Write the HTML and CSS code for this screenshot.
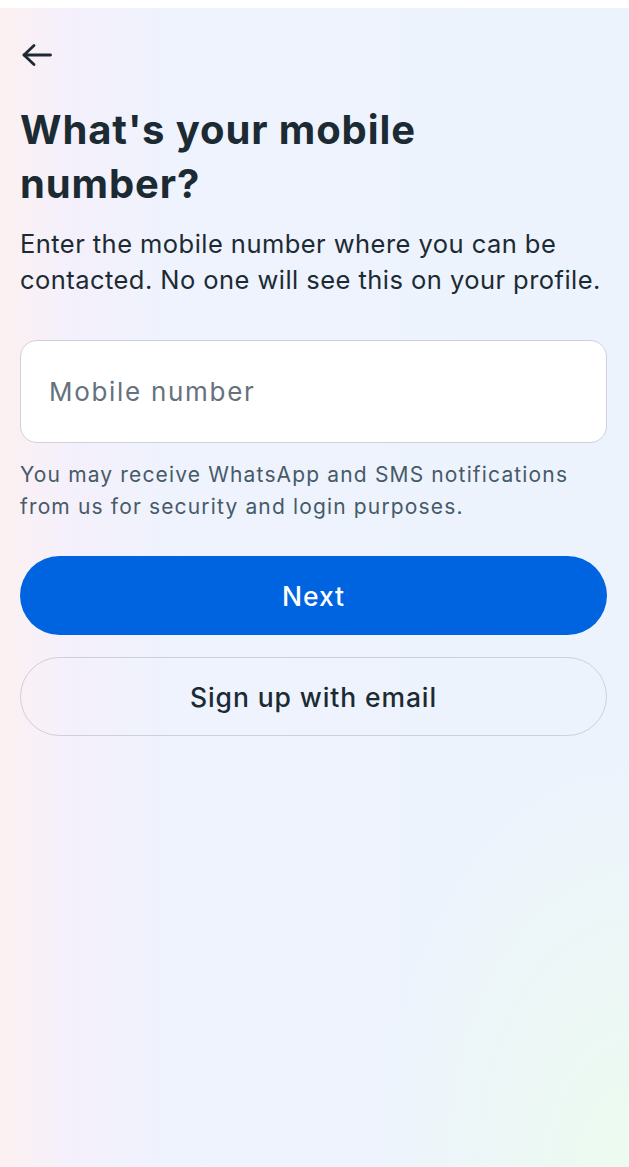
FILE: index.html
```html
<!DOCTYPE html>
<html lang="en">
<head>
<meta charset="utf-8">
<title>What's your mobile number?</title>
<link rel="stylesheet" href="styles.css">
</head>
<body>
<div class="statusbar"></div>
<main class="page">
  <button class="back" aria-label="Back">
    <svg width="32" height="24" viewBox="0 0 32 24" fill="none" stroke="#1c2b33" stroke-width="2.8" stroke-linecap="round" stroke-linejoin="round">
      <path d="M30.5 12H4"/>
      <path d="M14 2.5L4 12L14 21.5"/>
    </svg>
  </button>
  <h1 class="title">What's your mobile number?</h1>
  <p class="lead">Enter the mobile number where you can be contacted. No one will see this on your profile.</p>
  <div class="field"><span class="placeholder">Mobile number</span></div>
  <p class="hint">You may receive WhatsApp and SMS notifications from us for security and login purposes.</p>
  <div class="actions">
    <button class="btn primary">Next</button>
    <button class="btn secondary">Sign up with email</button>
  </div>
</main>
</body>
</html>
```
FILE: styles.css
```css
html, body {
  margin: 0;
  padding: 0;
  height: 100%;
}
body {
  font-family: Inter, "Noto Sans", sans-serif;
  color: #1c2b33;
  background:
    radial-gradient(ellipse 260px 420px at 100% 100%, rgba(236, 252, 238, 0.9), rgba(236, 252, 238, 0) 100%),
    linear-gradient(90deg, #fcf1f1 0%, #f5f0fb 10%, #eef3fd 28%, #edf3fd 100%);
  min-height: 1167px;
}
.statusbar {
  height: 8px;
  background: #ffffff;
}
.page {
  padding: 0 22px 0 20px;
  display: flex;
  flex-direction: column;
}
.back {
  margin-top: 35px;
  width: 32px;
  height: 24px;
  padding: 0;
  border: 0;
  background: none;
  display: flex;
  align-items: center;
}
.title {
  margin: 36px 0 0;
  max-width: 440px;
  font-size: 40px;
  line-height: 54px;
  font-weight: 700;
  letter-spacing: 0.9px;
  color: #1c2b33;
}
.lead {
  margin: 15px 0 0;
  font-size: 25.5px;
  line-height: 36px;
  letter-spacing: 0.45px;
  color: #1c2b33;
}
.field {
  margin-top: 42px;
  height: 101px;
  border: 1px solid #ced2d8;
  border-radius: 17px;
  background: #ffffff;
  display: flex;
  align-items: center;
  padding: 0 28px;
}
.placeholder {
  font-size: 26px;
  letter-spacing: 1.7px;
  color: #65727e;
}
.hint {
  margin: 16px 0 0;
  font-size: 21px;
  line-height: 32px;
  letter-spacing: 1.15px;
  color: #465a69;
}
.actions {
  margin-top: 33px;
  display: flex;
  flex-direction: column;
  gap: 22px;
}
.btn {
  height: 79px;
  border-radius: 40px;
  font-family: Inter, "Noto Sans", sans-serif;
  font-size: 26.5px;
  font-weight: 500;
  letter-spacing: 0.9px;
  padding: 0;
}
.primary {
  background: #0064e0;
  border: 0;
  color: #ffffff;
}
.secondary {
  background: transparent;
  border: 1px solid #cbd2d9;
  color: #1c2b33;
}
```
